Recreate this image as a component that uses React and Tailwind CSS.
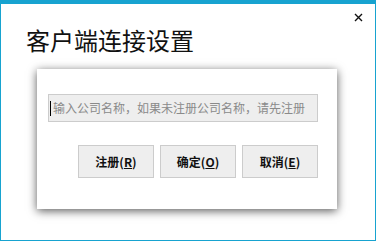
const font = { fontFamily: '"Noto Sans CJK SC", "Liberation Sans", sans-serif' };

const buttons = [
  { label: "注册", key: "R" },
  { label: "确定", key: "O" },
  { label: "取消", key: "E" },
];

const App = () => {
  return (
    <div
      className="w-[376px] h-[241px] bg-white border-x border-b border-t-4 border-[#17a3d0] flex flex-col"
      style={font}
    >
      <div className="flex justify-between items-start">
        <h1 className="ml-[25px] mt-[20px] text-[24px] leading-[32px] text-[#111]">
          客户端连接设置
        </h1>
        <button className="mt-[8px] mr-[12px] w-[10px] h-[10px] flex items-center justify-center">
          <svg width="9" height="9" viewBox="0 0 9 9">
            <path d="M1 1L8 8M8 1L1 8" stroke="#111" strokeWidth="1.4" />
          </svg>
        </button>
      </div>

      <div className="ml-[36px] mt-[13px] w-[300px] h-[140px] bg-white shadow-[0_2px_9px_rgba(0,0,0,0.65)] flex flex-col">
        <div className="ml-[11px] mt-[25px] w-[270px] h-[28px] bg-[#eeeeee] border border-[#cccccc] flex items-center">
          <span className="w-px h-[15px] bg-black ml-[1px]" />
          <span className="ml-[2px] text-[12px] leading-[16px] text-[#8a8a8a]">
            输入公司名称，如果未注册公司名称，请先注册
          </span>
        </div>

        <div className="mt-[23px] mr-[19px] flex justify-end gap-[6px]">
          {buttons.map((b) => (
            <button
              key={b.key}
              className="w-[76px] h-[33px] bg-[#eeeeee] border border-[#cccccc] text-[12px] font-bold text-[#111] flex items-center justify-center"
            >
              {b.label}(<span className="underline">{b.key}</span>)
            </button>
          ))}
        </div>
      </div>
    </div>
  );
};

export default App;
